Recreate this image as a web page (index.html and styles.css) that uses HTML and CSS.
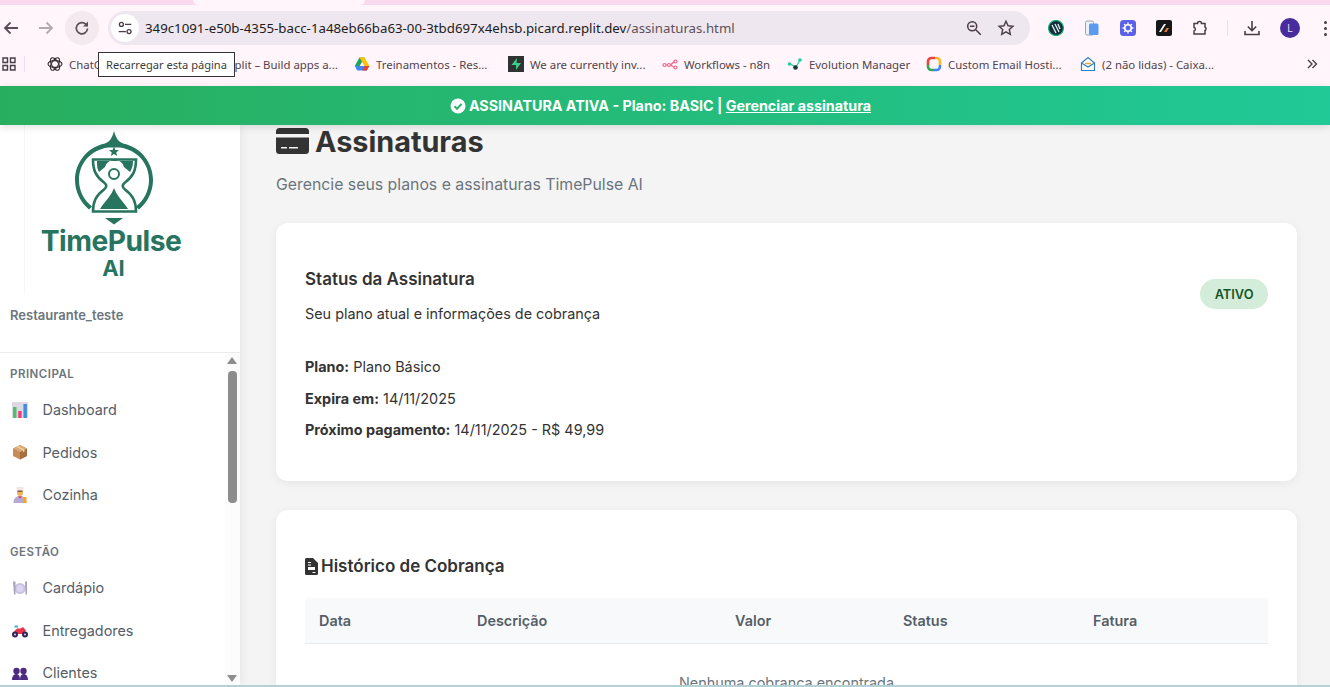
FILE: index.html
```html
<!DOCTYPE html>
<html lang="pt-BR">
<head>
    <meta charset="UTF-8">
    <meta name="viewport" content="width=device-width, initial-scale=1.0">
    <title>Assinaturas - TimePulse AI</title>
    <link rel="stylesheet" href="styles.css">
</head>
<body>

    <!-- Browser chrome -->
    <div class="tabstrip"><div class="tab-gap"></div></div>

    <div class="toolbar">
        <svg class="tool-icon" viewBox="0 0 20 20"><path d="M17 10H4M9.500 4.500 4 10l5.500 5.500" fill="none" stroke="#5b4c58" stroke-width="1.800"/></svg>
        <svg class="tool-icon forward" viewBox="0 0 20 20"><path d="M3 10h13M10.500 4.500 16 10l-5.500 5.500" fill="none" stroke="#b3a9b1" stroke-width="1.800"/></svg>
        <div class="reload">
            <svg class="tool-icon" viewBox="0 0 20 20"><path d="M15.500 10.500a5.600 5.600 0 1 1-1.700-4.300L15.500 8" fill="none" stroke="#5b4c58" stroke-width="1.700"/><path d="M16 3.500V8.500H11z" fill="#5b4c58"/></svg>
        </div>
        <div class="omnibox">
            <div class="site-info">
                <svg class="tool-icon" viewBox="0 0 20 20"><circle cx="6" cy="6" r="2.200" fill="none" stroke="#4a3d47" stroke-width="1.500"/><path d="M10 6h7M3 14h8" stroke="#4a3d47" stroke-width="1.500"/><circle cx="14.500" cy="14" r="2.200" fill="none" stroke="#4a3d47" stroke-width="1.500"/></svg>
            </div>
            <div class="url">349c1091-e50b-4355-bacc-1a48eb66ba63-00-3tbd697x4ehsb.picard.replit.dev<span class="url-path">/assinaturas.html</span></div>
            <svg class="tool-icon zoom-icon" viewBox="0 0 20 20"><circle cx="8" cy="8" r="5" fill="none" stroke="#4a3d47" stroke-width="1.700"/><path d="M5.500 8h5M12 12l5.500 5.500" stroke="#4a3d47" stroke-width="1.700"/></svg>
            <svg class="tool-icon star-icon" viewBox="0 0 20 20"><path d="M10 2.500l2.300 5 5.400.6-4 3.600 1.100 5.300L10 14.300 5.200 17l1.100-5.300-4-3.600 5.400-.6z" fill="none" stroke="#4a3d47" stroke-width="1.600"/></svg>
        </div>
        <div class="extensions">
            <svg class="ext-icon" viewBox="0 0 16 16"><circle cx="8" cy="8" r="7.500" fill="#12303a"/><circle cx="8" cy="8" r="7.500" fill="none" stroke="#1db37a" stroke-width="1.200"/><path d="M4 5l4 8M7 4l4 8M10 4l2 5" stroke="#e6eef0" stroke-width="1.300"/></svg>
            <svg class="ext-icon" viewBox="0 0 16 16"><rect x="1.500" y="1" width="8" height="14" rx="1.500" fill="#eef1f5" stroke="#9aa4b2"/><rect x="5" y="3.500" width="9.500" height="11.500" rx="1.500" fill="#5c9cf0"/></svg>
            <svg class="ext-icon" viewBox="0 0 16 16"><rect width="16" height="16" rx="3.500" fill="#5b62e8"/><circle cx="8" cy="8" r="3.200" fill="none" stroke="#fff" stroke-width="1.600"/><path d="M8 2.500v2M8 11.500v2M2.500 8h2M11.500 8h2M4.100 4.100l1.400 1.400M10.500 10.500l1.400 1.400M4.100 11.900l1.400-1.400M10.500 5.500l1.400-1.400" stroke="#fff" stroke-width="1.300"/></svg>
            <svg class="ext-icon" viewBox="0 0 16 16"><rect width="16" height="16" rx="2" fill="#16181c"/><path d="M3 12 8 4h2l-5 8z" fill="#fff"/><path d="M8 12l2.500-4h2.500l-2.500 4z" fill="#f07a1f"/></svg>
            <svg class="ext-icon" viewBox="0 0 16 16"><path d="M2 3.500h3.500a2 2 0 0 1 4 0H13V7a2 2 0 0 1 0 3.500V14H2v-3a1.800 1.800 0 0 0 0-3.500z" fill="none" stroke="#4a3d47" stroke-width="1.500"/></svg>
            <span class="tool-sep"></span>
            <svg class="ext-icon" viewBox="0 0 16 16"><path d="M8 1v9.500M3.800 6.500 8 10.700l4.200-4.200M1 11v3.500h14V11" fill="none" stroke="#4a3d47" stroke-width="1.600"/></svg>
            <span class="avatar">L</span>
            <span class="kebab"><i></i><i></i><i></i></span>
        </div>
    </div>

    <div class="bookmarks">
        <svg class="apps-icon" viewBox="0 0 14 14"><path d="M1 1h4.500v4.500H1zM8.500 1H13v4.500H8.500zM1 8.500h4.500V13H1zM8.500 8.500H13V13H8.500z" fill="none" stroke="#4a3d47" stroke-width="1.400"/></svg>
        <span class="bm-sep"></span>
        <div class="bm">
            <svg class="favicon" viewBox="0 0 16 16"><g fill="none" stroke="#2f2a2e" stroke-width="1.100"><ellipse cx="8" cy="8" rx="7" ry="3.400"/><ellipse cx="8" cy="8" rx="7" ry="3.400" transform="rotate(60 8 8)"/><ellipse cx="8" cy="8" rx="7" ry="3.400" transform="rotate(120 8 8)"/></g></svg>
            <span>ChatGPT</span>
        </div>
        <div class="bm">
            <svg class="favicon" viewBox="0 0 16 16"><path d="M2 2h5v4H2zM7 6h6v4H7zM2 10h5v4H2z" fill="#f26207"/></svg>
            <span>Replit – Build apps a...</span>
        </div>
        <div class="bm">
            <svg class="favicon" viewBox="0 0 16 16"><path d="M5.500 1.500h5L5.700 10H.8z" fill="#1ea362"/><path d="M10.500 1.500 15.300 10h-4.900L5.500 1.500z" fill="#ffc107"/><path d="M.8 10h14.500l-2.600 4.500H3.300z" fill="#4285f4"/><path d="M10.800 10h4.500l-2.600 4.500H8.200z" fill="#ea4335"/></svg>
            <span>Treinamentos - Res...</span>
        </div>
        <div class="bm">
            <svg class="favicon" viewBox="0 0 16 16"><rect width="16" height="16" fill="#2f3331"/><path d="M9 2 3.500 9H8v5l5-7H8.500z" fill="#3ecf8e"/></svg>
            <span>We are currently inv...</span>
        </div>
        <div class="bm">
            <svg class="favicon" viewBox="0 0 16 16"><g fill="none" stroke="#f0648c" stroke-width="1.200"><circle cx="2.500" cy="9" r="1.500"/><circle cx="7" cy="9" r="1.500"/><circle cx="13.500" cy="5.500" r="1.500"/><circle cx="13.500" cy="11.500" r="1.500"/><path d="M4 9h1.500M8.500 9 12 5.800M8.500 9 12 11.200"/></g></svg>
            <span>Workflows - n8n</span>
        </div>
        <div class="bm">
            <svg class="favicon" viewBox="0 0 16 16"><path d="M3 8l6 3 4-7" fill="none" stroke="#1fcf9a" stroke-width="1.200"/><circle cx="13" cy="4" r="1.800" fill="#1fcf9a"/><circle cx="2.500" cy="8" r="1.800" fill="#1fcf9a"/><circle cx="8.500" cy="11.500" r="2.300" fill="#123a30"/></svg>
            <span>Evolution Manager</span>
        </div>
        <div class="bm">
            <svg class="favicon" viewBox="0 0 16 16"><g fill="none" stroke-width="2.600"><path d="M2 9V5.500A3.500 3.500 0 0 1 5.500 2H9" stroke="#e8453c"/><path d="M9 2h1.500A3.500 3.500 0 0 1 14 5.500V9" stroke="#f9bb2d"/><path d="M14 9v1.500a3.500 3.500 0 0 1-3.500 3.500H8" stroke="#4285f4"/><path d="M8 14H5.500A3.500 3.500 0 0 1 2 10.500V9" stroke="#2fa84f"/></g></svg>
            <span>Custom Email Hosti...</span>
        </div>
        <div class="bm">
            <svg class="favicon" viewBox="0 0 16 16"><path d="M1.500 7 8 1.500 14.500 7v7.500h-13z" fill="#fff" stroke="#2f7fc1" stroke-width="1.200"/><path d="M1.500 7 8 11l6.500-4" fill="none" stroke="#2f7fc1" stroke-width="1.200"/><path d="M5 7.500h6" stroke="#f2a33a" stroke-width="1.500"/></svg>
            <span>(2 não lidas) - Caixa...</span>
        </div>
        <svg class="more-icon" viewBox="0 0 12 12"><path d="M2 2l4 4-4 4M6.500 2l4 4-4 4" fill="none" stroke="#4a3d47" stroke-width="1.400"/></svg>
    </div>

    <div class="tooltip">Recarregar esta página</div>

    <!-- Subscription banner -->
    <div class="banner">
        <svg class="banner-check" viewBox="0 0 16 16"><circle cx="8" cy="8" r="7.500" fill="#fff"/><path d="M4.500 8.200 7 10.700l4.500-4.700" fill="none" stroke="#2bb56c" stroke-width="2"/></svg>
        <span>ASSINATURA ATIVA - Plano: BASIC | <a href="#">Gerenciar assinatura</a></span>
    </div>

    <div class="app">
        <!-- Sidebar -->
        <aside class="sidebar">
            <div class="brand">
                <div class="logo">
                    <svg class="logo-mark" viewBox="69 128 90 98">
                        <path d="M105 143.500 C109 142 112 139 114 131 C116 139 119 142 123 143.500 C141 147 153 163 153 180 C153 192 147 203 139 209.500 L136 206.500 C144 200 149 191 149 180 C149 163 137 150 120 147.500 L108 147.500 C91 150 79 163 79 180 C79 191 84 200 92 206.500 L89 209.500 C81 203 75 192 75 180 C75 163 87 147 105 143.500 Z" fill="#27745f"/>
                        <path d="M114 146.500l1.400 3.400 3.600.2-2.800 2.300 1 3.500-3.200-2-3.200 2 1-3.500-2.800-2.300 3.600-.2z" fill="#27745f"/>
                        <path d="M93 159.500h43c0 11-3 17-11 23-3 2.200-3 4.800 0 7 8 6 11 12 11 22h-43c0-10 3-16 11-22 3-2.200 3-4.800 0-7-8-6-11-12-11-23z" fill="none" stroke="#27745f" stroke-width="2.600"/>
                        <path d="M97 161h36c0 4-1 8-3 11l-6-5a10 10 0 0 0-19 0l-6 5c-2-3-2-7-2-11z" fill="#27745f"/>
                        <circle cx="114" cy="174" r="5" fill="#fff" stroke="#27745f" stroke-width="2"/>
                        <path d="M114 188c3 8 8 12 14 21h-28c6-9 11-13 14-21z" fill="#27745f"/>
                        <path d="M105 218h18l-9 6.500z" fill="#27745f"/>
                    </svg>
                    <div class="logo-name">TimePulse</div>
                    <div class="logo-ai">AI</div>
                </div>
            </div>
            <div class="restaurant">Restaurante_teste</div>

            <div class="nav-wrap">
                <nav class="nav">
                    <div class="nav-label">PRINCIPAL</div>
                    <a class="nav-item" href="#">
                        <svg class="nav-icon" viewBox="0 0 16 16"><rect width="16" height="16" rx="1" fill="#dcd9e2"/><rect x="1" y="5" width="3.500" height="11" fill="#4fc06e"/><rect x="6.200" y="9" width="3.500" height="7" fill="#ef3f7c"/><rect x="11.400" y="2" width="3.500" height="14" fill="#3f8fe0"/></svg>
                        Dashboard
                    </a>
                    <a class="nav-item" href="#">
                        <svg class="nav-icon" viewBox="0 0 16 16"><path d="M8 1 15 4.500v7.500L8 15.500 1 12V4.500z" fill="#c68c55"/><path d="M8 8 15 4.500v7.500L8 15.500z" fill="#a56f3f"/><path d="M1 4.500 8 8l7-3.500L8 1z" fill="#dca878"/><path d="M4 2.800 11 6.300v2l1.500-.7V5.500L5.500 2z" fill="#efd3a8"/></svg>
                        Pedidos
                    </a>
                    <a class="nav-item" href="#">
                        <svg class="nav-icon" viewBox="0 0 16 16"><path d="M1.500 16c0-4.500 2.500-7 6.500-7s6.500 2.500 6.500 7z" fill="#b7a9d0"/><circle cx="8" cy="6" r="3" fill="#f0b45a"/><path d="M4.500 0h7v4h-7z" fill="#f1e6e4"/><path d="M5.500 3.500h5V5h-5z" fill="#8a5a3c"/><path d="M6 9.500h4l-2 2z" fill="#d23b3b"/><rect x="11.500" y="10" width="3" height="6" fill="#f5a623"/></svg>
                        Cozinha
                    </a>

                    <div class="nav-label nav-label-next">GESTÃO</div>
                    <a class="nav-item" href="#">
                        <svg class="nav-icon" viewBox="0 0 16 16"><circle cx="8" cy="8.500" r="5.500" fill="#c9c0e6"/><circle cx="8" cy="8.500" r="3.500" fill="#dcd6f0"/><path d="M1 1.500h2.500v13H2zM13 1.500h2v13h-1.500z" fill="#a9a4b4"/></svg>
                        Cardápio
                    </a>
                    <a class="nav-item" href="#">
                        <svg class="nav-icon" viewBox="0 0 16 16"><path d="M2 9.500l3-3h3.500l2.500-1.500 3 3.500-2.500 3.500H4.500z" fill="#e8344e"/><path d="M2.500 3.500h3.500v2H2.500z" fill="#2fb4e0"/><circle cx="3" cy="12.500" r="3" fill="#33274f"/><circle cx="13" cy="12.500" r="3" fill="#33274f"/><circle cx="3" cy="12.500" r="1.100" fill="#c9c0e6"/><circle cx="13" cy="12.500" r="1.100" fill="#c9c0e6"/></svg>
                        Entregadores
                    </a>
                    <a class="nav-item" href="#">
                        <svg class="nav-icon" viewBox="0 0 16 16"><circle cx="4.500" cy="6" r="3.200" fill="#4b2a7f"/><circle cx="11.500" cy="6" r="3.200" fill="#4b2a7f"/><path d="M0 15c0-4 2-6 4.500-6S8 11 8 15zM8 15c0-4 1-6 3.500-6s4.500 2 4.500 6z" fill="#4b2a7f"/></svg>
                        Clientes
                    </a>
                </nav>
                <div class="scrollbar">
                    <span class="arrow-up"></span>
                    <span class="thumb"></span>
                    <span class="arrow-down"></span>
                </div>
            </div>
        </aside>

        <!-- Main content -->
        <main class="content">
            <h1 class="page-title">
                <svg class="title-icon" viewBox="0 0 33 26"><path d="M3.500 0h26A3.500 3.500 0 0 1 33 3.500V6H0V3.500A3.500 3.500 0 0 1 3.500 0zM0 9.500h33v13a3.500 3.500 0 0 1-3.500 3.500h-26A3.500 3.500 0 0 1 0 22.500z" fill="#333"/><path d="M5 19h6v1.500H5zM13 19h9v1.500h-9z" fill="#f4f4f4"/></svg>
                Assinaturas
            </h1>
            <p class="page-sub">Gerencie seus planos e assinaturas TimePulse AI</p>

            <section class="card status-card">
                <div class="status-head">
                    <div>
                        <h3 class="card-title">Status da Assinatura</h3>
                        <p class="card-sub">Seu plano atual e informações de cobrança</p>
                    </div>
                    <span class="badge">ATIVO</span>
                </div>
                <div class="info">
                    <p><strong>Plano:</strong> Plano Básico</p>
                    <p><strong>Expira em:</strong> 14/11/2025</p>
                    <p><strong>Próximo pagamento:</strong> 14/11/2025 - R$ 49,99</p>
                </div>
            </section>

            <section class="card history-card">
                <h3 class="card-title history-title">
                    <svg class="file-icon" viewBox="0 0 13 17"><path d="M1.500 0H8l5 5v10.500a1.500 1.500 0 0 1-1.500 1.500h-10A1.500 1.500 0 0 1 0 15.500v-14A1.500 1.500 0 0 1 1.500 0z" fill="#333"/><path d="M3 4h3v1H3zM3 6.500h3v1H3zM3 9h7v3H3zM7.500 14h3v1h-3z" fill="#fff"/></svg>
                    Histórico de Cobrança
                </h3>
                <table class="billing">
                    <thead>
                        <tr>
                            <th class="col-date">Data</th>
                            <th class="col-desc">Descrição</th>
                            <th class="col-value">Valor</th>
                            <th class="col-status">Status</th>
                            <th>Fatura</th>
                        </tr>
                    </thead>
                    <tbody>
                        <tr>
                            <td colspan="5" class="empty">Nenhuma cobrança encontrada</td>
                        </tr>
                    </tbody>
                </table>
            </section>
        </main>
    </div>

    <div class="window-edge"></div>

</body>
</html>
```

FILE: styles.css
```css
* {
    box-sizing: border-box;
}

body {
    margin: 0;
    height: 687px;
    overflow: hidden;
    display: flex;
    flex-direction: column;
    font-family: Inter, Arial, sans-serif;
    background-color: #f4f4f4;
    color: #333;
}

a {
    color: inherit;
}

p, h1, h3 {
    margin: 0;
}

/* Browser chrome */
.tabstrip {
    height: 5px;
    background: #f8d9ee;
    padding-left: 193px;
}

.tab-gap {
    width: 172px;
    height: 5px;
    background: #fff5fa;
    border-radius: 0 0 6px 6px;
}

.toolbar {
    height: 42px;
    background: #fff5fa;
    display: flex;
    align-items: center;
    padding-top: 4px;
}

.tool-icon {
    width: 20px;
    height: 20px;
    flex: none;
}

.toolbar > .tool-icon:first-child {
    margin-left: 1px;
}

.forward {
    margin-left: 15px;
}

.reload {
    width: 34px;
    height: 34px;
    margin-left: 9px;
    border-radius: 50%;
    background: #f3e9ef;
    display: flex;
    align-items: center;
    justify-content: center;
}

.omnibox {
    width: 922px;
    height: 34px;
    margin-left: 9px;
    border-radius: 17px;
    background: #efe7ef;
    display: flex;
    align-items: center;
    padding-left: 3px;
}

.site-info {
    width: 28px;
    height: 28px;
    border-radius: 50%;
    background: #fff;
    display: flex;
    align-items: center;
    justify-content: center;
}

.site-info .tool-icon {
    width: 18px;
    height: 18px;
}

.url {
    margin-left: 6px;
    flex: 1;
    font-family: "Noto Sans", Arial, sans-serif;
    font-size: 13.250px;
    color: #211b20;
    white-space: nowrap;
}

.url-path {
    color: #5d5159;
}

.zoom-icon {
    width: 18px;
    height: 18px;
    margin-right: 14px;
}

.star-icon {
    width: 18px;
    height: 18px;
    margin-right: 15px;
}

.extensions {
    display: flex;
    align-items: center;
    margin-left: 18px;
    gap: 20px;
}

.ext-icon {
    width: 16px;
    height: 16px;
    flex: none;
}

.tool-sep {
    width: 1px;
    height: 16px;
    background: #f8d9ee;
    margin: 0 -4px 0 -1px;
}

.avatar {
    width: 20px;
    height: 20px;
    border-radius: 50%;
    background: #4a2b9e;
    color: #e9e2f7;
    font-size: 10px;
    display: flex;
    align-items: center;
    justify-content: center;
}

.kebab {
    display: flex;
    flex-direction: column;
    gap: 3px;
    margin-left: 4px;
}

.kebab i {
    width: 3px;
    height: 3px;
    border-radius: 50%;
    background: #4a3d47;
}

.bookmarks {
    height: 39px;
    background: #fff5fa;
    display: grid;
    grid-template-columns: 14px 31px 152px 155px 154px 154px 125px 139px 154px 226px 12px;
    align-items: center;
    padding-left: 2px;
    font-family: "Noto Sans", Arial, sans-serif;
    font-size: 11.400px;
    color: #4f444c;
    padding-bottom: 5px;
}

.apps-icon {
    width: 14px;
    height: 14px;
}

.bm-sep {
    width: 1px;
    height: 16px;
    margin-left: 8px;
    background: #f8d9ee;
}

.bm {
    display: flex;
    align-items: center;
    gap: 6px;
    white-space: nowrap;
    overflow: hidden;
}

.favicon {
    width: 16px;
    height: 16px;
    flex: none;
}

.more-icon {
    width: 12px;
    height: 12px;
}

.tooltip {
    position: absolute;
    left: 98px;
    top: 52px;
    width: 137px;
    height: 25px;
    background: #fff;
    border: 1px solid #333;
    font-family: "Noto Sans", Arial, sans-serif;
    font-size: 11.100px;
    color: #3c3c3c;
    display: flex;
    align-items: center;
    justify-content: center;
    z-index: 5;
}

/* Banner */
.banner {
    position: relative;
    z-index: 3;
    height: 39px;
    flex: none;
    padding-right: 9px;
    background: linear-gradient(90deg, #28ae5e, #20c997);
    box-shadow: 0 2px 8px rgba(0, 0, 0, 0.12);
    color: #fff;
    font-size: 14.300px;
    font-weight: 700;
    display: flex;
    align-items: center;
    justify-content: center;
    gap: 3px;
}

.banner-check {
    width: 16px;
    height: 16px;
}

/* App layout */
.app {
    flex: 1;
    min-height: 0;
    display: flex;
}

.sidebar {
    position: relative;
    z-index: 2;
    width: 240px;
    flex: none;
    background: #fff;
    box-shadow: 2px 0 8px rgba(0, 0, 0, 0.06);
    display: flex;
    flex-direction: column;
}

.brand {
    height: 170px;
    padding-left: 24px;
}

.logo {
    width: 178px;
    height: 170px;
    border-left: 1px solid #f6f6f6;
    display: flex;
    flex-direction: column;
    align-items: center;
    color: #27745f;
    font-weight: 700;
    padding-top: 3px;
}

.logo-mark {
    width: 90px;
    height: 98px;
    flex: none;
}

.logo-name {
    font-size: 28.200px;
    line-height: 28px;
    margin-top: 1px;
    padding-right: 5px;
    letter-spacing: -0.5px;
}

.logo-ai {
    font-size: 22px;
    line-height: 24px;
    margin-top: 1px;
}

.restaurant {
    height: 58px;
    padding: 12px 10px 0;
    border-bottom: 1px solid #e9ecef;
    font-size: 13px;
    font-weight: 600;
    color: #6c757d;
}

.nav-wrap {
    flex: 1;
    min-height: 0;
    display: flex;
}

.nav {
    flex: 1;
    overflow: hidden;
    padding: 14px 0 0 10px;
}

.nav-label {
    font-size: 11.500px;
    line-height: 14px;
    font-weight: 600;
    letter-spacing: 0.5px;
    color: #6c757d;
    margin-bottom: 7.250px;
}

.nav-label-next {
    margin-top: 28.750px;
    margin-bottom: 8px;
}

.nav-item {
    height: 42.500px;
    display: flex;
    align-items: center;
    gap: 14.500px;
    padding-left: 2px;
    font-size: 14.400px;
    color: #555e68;
    text-decoration: none;
}

.nav-icon {
    width: 16px;
    height: 16px;
    flex: none;
}

.scrollbar {
    width: 15px;
    background: #fcfcfc;
    display: flex;
    flex-direction: column;
    align-items: center;
    padding: 4px 2px 3px 1px;
}

.arrow-up, .arrow-down {
    width: 0;
    height: 0;
    border-left: 5px solid transparent;
    border-right: 5px solid transparent;
}

.arrow-up {
    border-bottom: 7px solid #8d8d8d;
}

.arrow-down {
    border-top: 7px solid #8d8d8d;
    margin-top: auto;
}

.thumb {
    width: 9px;
    height: 132px;
    margin-top: 7px;
    border-radius: 4px;
    background: #8d8d8d;
}

/* Main content */
.content {
    flex: 1;
    min-width: 0;
    overflow: hidden;
    padding: 0 33px 0 36px;
}

.page-title {
    height: 32px;
    display: flex;
    align-items: center;
    gap: 6px;
    font-size: 28.800px;
    font-weight: 700;
}

.title-icon {
    width: 33px;
    height: 26px;
}

.page-sub {
    margin-top: 18px;
    font-size: 15.840px;
    line-height: 20px;
    color: #6c757d;
}

.card {
    background: #fff;
    border-radius: 12px;
    box-shadow: 0 2px 10px rgba(0, 0, 0, 0.06);
    padding: 0 29px;
}

.status-card {
    height: 258px;
    margin-top: 28px;
    padding-top: 45px;
}

.status-head {
    display: flex;
    justify-content: space-between;
    align-items: flex-start;
}

.card-title {
    font-size: 17px;
    line-height: 22px;
    font-weight: 600;
}

.card-sub {
    margin-top: 14px;
    font-size: 14.400px;
    line-height: 20px;
}

.badge {
    height: 30px;
    margin-top: 11px;
    padding: 0 14.500px;
    border-radius: 15px;
    background: #d4edda;
    color: #155724;
    font-size: 12.800px;
    font-weight: 600;
    display: flex;
    align-items: center;
}

.info {
    margin-top: 33px;
    font-size: 14.400px;
    line-height: 20px;
}

.info p {
    margin-bottom: 11.500px;
}

.info strong {
    font-weight: 700;
}

.history-card {
    margin-top: 29px;
    padding-top: 45px;
    height: 300px;
}

.history-title {
    display: flex;
    align-items: center;
    gap: 3px;
}

.file-icon {
    width: 13px;
    height: 17px;
}

.billing {
    width: 100%;
    margin-top: 21px;
    border-collapse: collapse;
    table-layout: fixed;
    font-size: 14.400px;
}

.billing th {
    height: 45px;
    padding: 0 14px;
    background: #f8f9fa;
    border-bottom: 1px solid #e9ecef;
    font-weight: 600;
    color: #555e68;
    text-align: left;
}

.col-date {
    width: 158px;
}

.col-desc {
    width: 258px;
}

.col-value {
    width: 168px;
}

.col-status {
    width: 190px;
}

.empty {
    padding-top: 30px;
    text-align: center;
    color: #6c757d;
}

.window-edge {
    height: 2px;
    flex: none;
    background: #b4d2d6;
    position: relative;
    z-index: 4;
}
```
